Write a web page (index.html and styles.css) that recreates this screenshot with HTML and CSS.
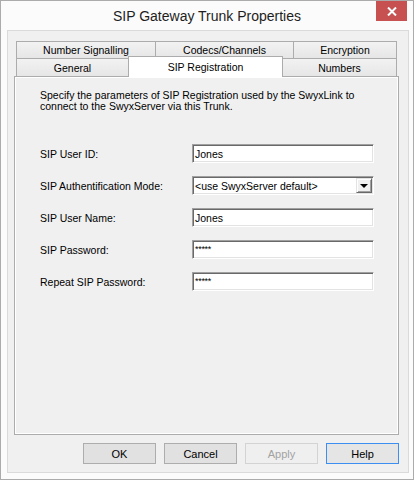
FILE: index.html
```html
<!DOCTYPE html>
<html lang="en">
<head>
<meta charset="utf-8">
<title>SIP Gateway Trunk Properties</title>
<link rel="stylesheet" href="styles.css">
</head>
<body>
<div class="window">
  <div class="titlebar">
    <span class="title">SIP Gateway Trunk Properties</span>
    <button class="close" type="button" aria-label="Close">
      <svg width="10" height="9" viewBox="0 0 10 9">
        <path d="M1 0.5 L9 8.5 M9 0.5 L1 8.5" stroke="#fff" stroke-width="2" fill="none"/>
      </svg>
    </button>
  </div>
  <div class="client">
    <div class="tabs">
      <div class="tabrow back">
        <div class="tab t-signal">Number Signalling</div>
        <div class="tab t-codec">Codecs/Channels</div>
        <div class="tab t-enc">Encryption</div>
      </div>
      <div class="tabrow front">
        <div class="tab t-general">General</div>
        <div class="tab t-sip selected">SIP Registration</div>
        <div class="tab t-numbers">Numbers</div>
      </div>
    </div>
    <div class="panel">
      <p class="intro">Specify the parameters of SIP Registration used by the SwyxLink to<br>connect to the SwyxServer via this Trunk.</p>
      <div class="form">
        <span class="label">SIP User ID:</span>
        <div class="field">Jones</div>
        <span class="label">SIP Authentification Mode:</span>
        <div class="field combo">&lt;use SwyxServer default&gt;<span class="drop"><span class="arrow"></span></span></div>
        <span class="label">SIP User Name:</span>
        <div class="field">Jones</div>
        <span class="label">SIP Password:</span>
        <div class="field secret">*****</div>
        <span class="label">Repeat SIP Password:</span>
        <div class="field secret">*****</div>
      </div>
    </div>
    <div class="buttons">
      <button class="btn" type="button">OK</button>
      <button class="btn" type="button">Cancel</button>
      <button class="btn disabled" type="button">Apply</button>
      <button class="btn default" type="button">Help</button>
    </div>
  </div>
</div>
</body>
</html>
```

FILE: styles.css
```css
html, body {
  margin: 0;
  background: #ffffff;
}

.window {
  box-sizing: border-box;
  width: 414px;
  height: 480px;
  border: 1px solid #ababab;
  background: #fbfbfb;
  display: flex;
  flex-direction: column;
}

/* caption bar */
.titlebar {
  height: 29px;
  display: grid;
  grid-template-columns: 1fr auto 1fr;
  align-items: center;
}

.title {
  grid-column: 2;
  font: 14px "Liberation Sans", Arial, sans-serif;
  color: #1e1e1e;
  padding-top: 1px;
}

.close {
  grid-column: 3;
  justify-self: end;
  align-self: start;
  width: 31px;
  height: 20px;
  margin-right: 6px;
  padding: 0;
  border: 0;
  background: #c75050;
  display: flex;
  align-items: center;
  justify-content: center;
}

.close svg {
  display: block;
}

/* dialog body */
.client {
  flex: 1;
  margin: 0 4px 6px 6px;
  border: 1px solid #dadada;
  background: #f0f0f0;
  padding: 10px 9px 8px 6px;
  display: flex;
  flex-direction: column;
  font-family: "Liberation Sans", Arial, sans-serif;
}

/* property sheet tabs */
.tabs {
  margin: 0 2px;
}

.tabrow {
  display: flex;
  align-items: flex-start;
}

.tabrow.back {
  height: 17px;
}

.tabrow.front {
  height: 18px;
}

.tab {
  box-sizing: border-box;
  border: 1px solid #acacac;
  border-bottom: 0;
  background: linear-gradient(#f2f2f2, #e6e6e6);
  font-size: 10.5px;
  color: #000;
  display: flex;
  align-items: center;
  justify-content: center;
  white-space: nowrap;
}

.tab + .tab {
  margin-left: -1px;
}

.back .tab {
  height: 17px;
}

.front .tab {
  height: 18px;
}

.t-signal { width: 140px; }
.t-codec { width: 139px; }
.t-enc { width: 104px; }
.t-general { width: 113px; }
.t-sip { width: 155px; }
.t-numbers { width: 115px; }

.front .tab.selected {
  position: relative;
  z-index: 1;
  height: 21px;
  margin-top: -2px;
  background: #ffffff;
}

/* tab page */
.panel {
  flex: 1;
  border: 1px solid #acacac;
  box-shadow: inset 0 0 0 1px #ffffff;
  padding: 13px 0 0 25px;
}

.intro {
  margin: 0;
  font-size: 10.5px;
  line-height: 11px;
  color: #000;
}

.form {
  margin-top: 32px;
  display: grid;
  grid-template-columns: 152px 182px;
  grid-auto-rows: 19px;
  row-gap: 13px;
  font-size: 10.5px;
  color: #000;
}

.label {
  align-self: center;
  white-space: nowrap;
}

.field {
  box-sizing: border-box;
  height: 19px;
  border: 1px solid;
  border-color: #a0a0a0 #ffffff #ffffff #a0a0a0;
  box-shadow: inset 1px 1px 0 #696969, inset -1px -1px 0 #e3e3e3;
  background: #ffffff;
  padding: 0 2px 0 2px;
  display: flex;
  align-items: center;
  white-space: nowrap;
}

.field.secret {
  align-items: flex-start;
  padding-top: 3px;
  font-size: 9px;
  letter-spacing: -0.3px;
}

.combo {
  padding-right: 1px;
}

.drop {
  box-sizing: border-box;
  margin-left: auto;
  width: 16px;
  height: 15px;
  border: 1px solid;
  border-color: #e3e3e3 #696969 #696969 #e3e3e3;
  box-shadow: inset 1px 1px 0 #ffffff, inset -1px -1px 0 #a0a0a0;
  background: #f0f0f0;
  display: flex;
  align-items: center;
  justify-content: center;
}

.arrow {
  width: 0;
  height: 0;
  border-left: 4px solid transparent;
  border-right: 4px solid transparent;
  border-top: 4px solid #000;
  margin-top: 1px;
}

/* command buttons */
.buttons {
  margin-top: 8px;
  display: flex;
  justify-content: flex-end;
  gap: 8px;
}

.btn {
  box-sizing: border-box;
  width: 73px;
  height: 21px;
  padding: 0;
  border: 1px solid #adadad;
  background: #e1e1e1;
  font: 11px "Liberation Sans", Arial, sans-serif;
  color: #000;
}

.btn.disabled {
  border-color: #d3d3d3;
  background: #efefef;
  color: #a2a2a2;
}

.btn.default {
  border-color: #3c8ff0;
  background: #e5e5e5;
}
```
